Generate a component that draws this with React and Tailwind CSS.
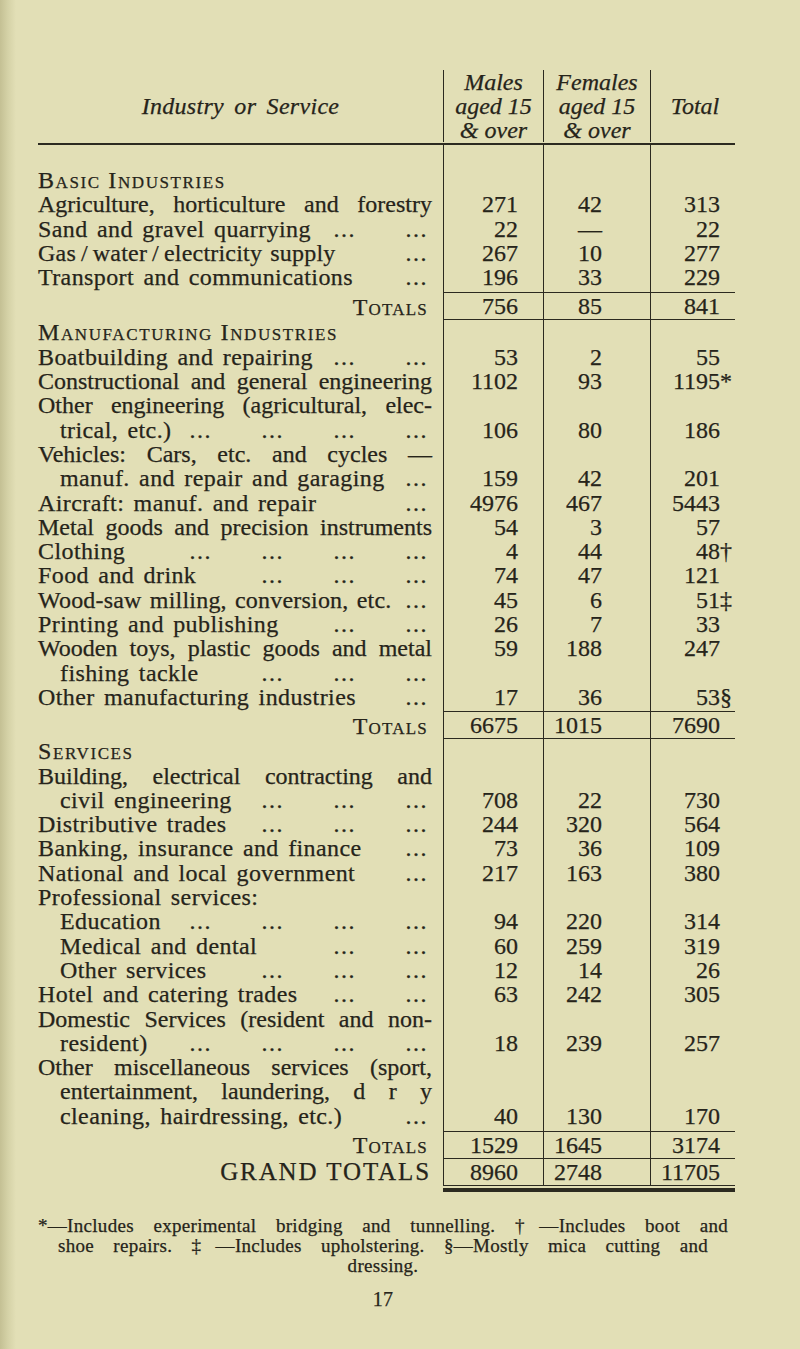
const GRID = "grid grid-cols-[405px_100px_107px_85px]";
const LINE = "border-l border-[#2c2a20]";

const basic = [
  { text: "Basic Industries", head: true },
  { text: "Agriculture, horticulture and forestry", justify: true, m: "271", f: "42", t: "313" },
  { text: "Sand and gravel quarrying", dots: 2, m: "22", f: "—", t: "22" },
  { text: "Gas\u2009/\u2009water\u2009/\u2009electricity supply", dots: 1, m: "267", f: "10", t: "277", tight: true },
  { text: "Transport and communications", dots: 1, m: "196", f: "33", t: "229" },
];

const manufacturing = [
  { text: "Manufacturing Industries", head: true },
  { text: "Boatbuilding and repairing", dots: 2, m: "53", f: "2", t: "55" },
  { text: "Constructional and general engineering", justify: true, m: "1102", f: "93", t: "1195", mark: "*" },
  { text: "Other engineering (agricultural, elec-", justify: true },
  { text: "trical, etc.)", indent: true, dots: 4, m: "106", f: "80", t: "186" },
  { text: "Vehicles: Cars, etc. and cycles —", justify: true },
  { text: "manuf. and repair and garaging", indent: true, dots: 1, m: "159", f: "42", t: "201" },
  { text: "Aircraft: manuf. and repair", dots: 1, m: "4976", f: "467", t: "5443" },
  { text: "Metal goods and precision instruments", justify: true, m: "54", f: "3", t: "57" },
  { text: "Clothing", dots: 4, m: "4", f: "44", t: "48", mark: "†" },
  { text: "Food and drink", dots: 3, m: "74", f: "47", t: "121" },
  { text: "Wood-saw milling, conversion, etc.", dots: 1, m: "45", f: "6", t: "51", mark: "‡", tight: true },
  { text: "Printing and publishing", dots: 2, m: "26", f: "7", t: "33" },
  { text: "Wooden toys, plastic goods and metal", justify: true, m: "59", f: "188", t: "247" },
  { text: "fishing tackle", indent: true, dots: 3 },
  { text: "Other manufacturing industries", dots: 1, m: "17", f: "36", t: "53", mark: "§" },
];

const services = [
  { text: "Services", head: true },
  { text: "Building, electrical contracting and", justify: true },
  { text: "civil engineering", indent: true, dots: 3, m: "708", f: "22", t: "730" },
  { text: "Distributive trades", dots: 3, m: "244", f: "320", t: "564" },
  { text: "Banking, insurance and finance", dots: 1, m: "73", f: "36", t: "109" },
  { text: "National and local government", dots: 1, m: "217", f: "163", t: "380" },
  { text: "Professional services:" },
  { text: "Education", indent: true, dots: 4, m: "94", f: "220", t: "314" },
  { text: "Medical and dental", indent: true, dots: 2, m: "60", f: "259", t: "319" },
  { text: "Other services", indent: true, dots: 3, m: "12", f: "14", t: "26" },
  { text: "Hotel and catering trades", dots: 2, m: "63", f: "242", t: "305" },
  { text: "Domestic Services (resident and non-", justify: true },
  { text: "resident)", indent: true, dots: 4, m: "18", f: "239", t: "257" },
  { text: "Other miscellaneous services (sport,", justify: true },
  { text: "entertainment, laundering, d r y", indent: true, justify: true },
  { text: "cleaning, hairdressing, etc.)", indent: true, dots: 1, m: "40", f: "130", t: "170" },
];

function Label({ text, indent, dots = 0, justify, head, tight }) {
  const pad = indent ? "pl-[22px]" : "";
  if (head) {
    return <div className="pr-[11px] [font-variant-caps:small-caps] tracking-[1.6px]">{text}</div>;
  }
  if (justify) {
    return (
      <div className={`pr-[11px] ${pad} text-justify [text-align-last:justify]`}>{text}</div>
    );
  }
  return (
    <div className={`flex pr-[15px] ${pad}`}>
      <span
        className={`min-w-0 flex-1 whitespace-nowrap ${
          tight ? "tracking-[0.2px] [word-spacing:2px]" : "tracking-[0.4px] [word-spacing:3px]"
        }`}
      >
        {text}
      </span>
      {Array.from({ length: dots }, (_, i) => (
        <span key={i} className="w-[72px] shrink-0 text-right tracking-[1.5px]">
          ...
        </span>
      ))}
    </div>
  );
}

function Total({ t, mark }) {
  return (
    <>
      {t}
      {mark && <span className="inline-block w-0 text-left">{mark}</span>}
    </>
  );
}

function Row(r) {
  return (
    <div className={GRID}>
      <Label {...r} />
      <div className={`${LINE} pr-[25px] text-right`}>{r.m}</div>
      <div className={`${LINE} pr-[48px] text-right`}>{r.f}</div>
      <div className={`${LINE} pr-[15px] text-right`}>
        <Total t={r.t} mark={r.mark} />
      </div>
    </div>
  );
}

function Spacer({ h }) {
  return (
    <div className={`${GRID} ${h}`}>
      <div />
      <div className={LINE} />
      <div className={LINE} />
      <div className={LINE} />
    </div>
  );
}

function Totals({ m, f, t, grand }) {
  const cell = grand
    ? "border-l border-b-[1.5px] border-[#2c2a20] leading-[26px]"
    : "border-l border-y-[1.5px] border-[#2c2a20] leading-[26px]";
  return (
    <div className={GRID}>
      {grand ? (
        <div className="pr-[12px] text-right text-[25px] leading-[26px] tracking-[1.9px]">GRAND TOTALS</div>
      ) : (
        <div className="pt-[1.5px] pr-[15px] text-right leading-[26px] [font-variant-caps:small-caps] tracking-[1.2px]">
          Totals
        </div>
      )}
      <div className={`${cell} pr-[25px] text-right`}>{m}</div>
      <div className={`${cell} pr-[48px] text-right`}>{f}</div>
      <div className={`${cell} pr-[15px] text-right`}>{t}</div>
    </div>
  );
}

export default function App() {
  return (
    <div className="flex min-h-[1349px] w-[800px] bg-[#e2dfb6] font-['Liberation_Serif',serif] text-[#26241a] [-webkit-text-stroke:0.25px_#26241a]">
      <div className="w-[16px] shrink-0 bg-linear-to-r from-[#c4c094] via-[#d5d2a7] to-[#e2dfb6]" />
      <div className="w-[697px] pl-[22px] pt-[70px] text-[24px]">
        <div className={`${GRID} h-[70px] italic leading-[24px]`}>
          <div className="flex items-center justify-center tracking-[0.3px] [word-spacing:4px]">
            Industry or Service
          </div>
          <div className={`${LINE} flex flex-col items-center justify-center`}>
            <span>Males</span>
            <span>aged 15</span>
            <span>&amp; over</span>
          </div>
          <div className={`${LINE} flex flex-col items-center justify-center`}>
            <span>Females</span>
            <span>aged 15</span>
            <span>&amp; over</span>
          </div>
          <div className={`${LINE} flex items-center justify-center pl-[4px]`}>Total</div>
        </div>
        <div className="mt-[3px] h-[2px] w-[697px] bg-[#2c2a20]" />

        <div className="leading-[24.3px]">
          <Spacer h="h-[23px]" />
          {basic.map((r, i) => (
            <Row key={i} {...r} />
          ))}
          <Spacer h="h-[3px]" />
          <Totals m="756" f="85" t="841" />
          {manufacturing.map((r, i) => (
            <Row key={i} {...r} />
          ))}
          <Spacer h="h-[2px]" />
          <Totals m="6675" f="1015" t="7690" />
          {services.map((r, i) => (
            <Row key={i} {...r} />
          ))}
          <Spacer h="h-[3px]" />
          <Totals m="1529" f="1645" t="3174" />
          <Totals m="8960" f="2748" t="11705" grand />
          <div className={GRID}>
            <div />
            <div className="col-span-3 pt-[2px]">
              <div className="h-[4px] bg-[#2c2a20]" />
            </div>
          </div>
        </div>

        <div className="mt-[24px] w-[690px] text-[19px] leading-[20px] tracking-[0.3px]">
          <div className="text-justify [text-align-last:justify]">
            *—Includes experimental bridging and tunnelling. †—Includes boot and
          </div>
          <div className="mx-auto w-[650px] text-justify [text-align-last:justify]">
            shoe repairs. ‡—Includes upholstering. §—Mostly mica cutting and
          </div>
          <div className="text-center">dressing.</div>
          <div className="mt-[13px] text-center text-[20px] leading-[20px]">17</div>
        </div>
      </div>
    </div>
  );
}
